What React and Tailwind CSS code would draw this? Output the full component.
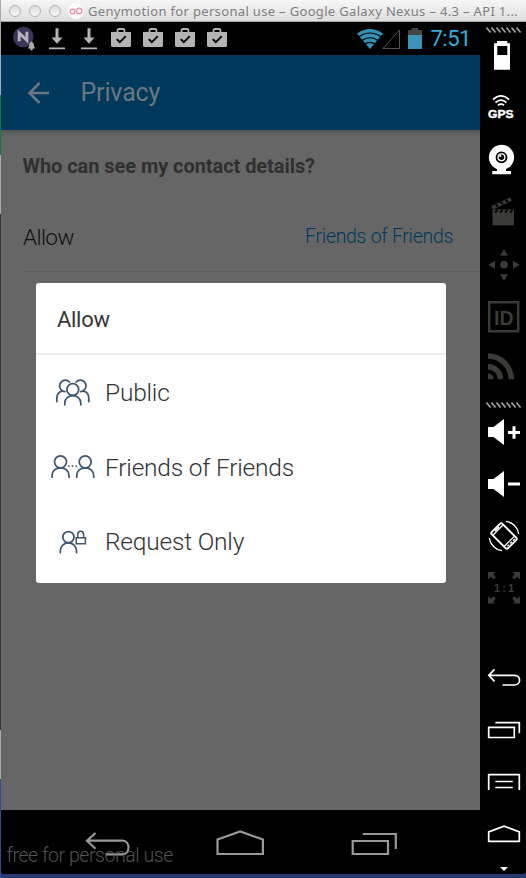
import React from "react";

const OPTIONS = [
  { label: "Public", icon: PublicIcon },
  { label: "Friends of Friends", icon: FriendsIcon },
  { label: "Request Only", icon: RequestIcon },
];

/* TITLE BAR */
function TitleBar() {
  return (
    <div className="flex h-[22px] items-center overflow-hidden border-b border-[#a3a3a3] bg-gradient-to-b from-[#f6f6f6] to-[#dedede] pl-[8px]">
      <div className="flex gap-2">
        {[0, 1, 2].map((i) => (
          <span key={i} className="h-3 w-3 rounded-full border border-[#b3b3b3] bg-gradient-to-b from-[#dcdcdc] to-[#f8f8f8]" />
        ))}
      </div>
      <svg className="ml-[7px] h-4 w-4 shrink-0" viewBox="0 0 16 16" fill="none" stroke="#e795b1" strokeWidth="1.4">
        <circle cx="8" cy="8" r="8" fill="#fafafa" stroke="none" />
        <circle cx="4.5" cy="8.5" r="2.3" />
        <circle cx="11.2" cy="8" r="2.8" />
      </svg>
      <span className="ml-[4px] whitespace-nowrap font-['Noto_Sans',sans-serif] text-[13px] leading-[20px] tracking-[0.335px] text-[#7f7f7f]">
        Genymotion for personal use – Google Galaxy Nexus – 4.3 – API 1...
      </span>
    </div>
  );
}

/* STATUS BAR */
function DownloadIcon() {
  return (
    <svg className="h-[33px] w-4" viewBox="0 0 16 33" fill="#b4b4b4">
      <path d="M6.5 6.3h3v9.200h4L8 21.700l-5.500-6.200h4zM0 25.500h16v1.800H0z" />
    </svg>
  );
}

function BagIcon() {
  return (
    <svg className="h-[33px] w-5" viewBox="0 0 20 33">
      <path d="M6.500 12V8.500q0-1.500 1.500-1.500h4q1.500 0 1.500 1.500V12" fill="none" stroke="#b4b4b4" strokeWidth="1.800" />
      <path d="M0 10h20v13.500q0 1.500-1.500 1.500h-17Q0 25 0 23.500z" fill="#b4b4b4" />
      <path d="M5.800 17.200l3 3 6-6" fill="none" stroke="#000" strokeWidth="1.900" />
    </svg>
  );
}

function StatusBar() {
  return (
    <div className="flex h-[33px] items-center bg-black pl-3">
      <svg className="h-[33px] w-[24px]" viewBox="13 22 24 33">
        <circle cx="23.300" cy="37" r="10.300" fill="#3d3459" />
        <path d="M19.200 41.300v-8.300l7.700 7.300v-8.600" fill="none" stroke="#b5b2bb" strokeWidth="2.900" />
        <path d="M31.500 41.500q2.600 1 2.600 5l1.200 2h-7.600l1.200-2q0-4 2.600-5zM30.300 48.500h2.400v1.800h-2.400z" fill="#aaa" />
      </svg>
      <div className="ml-3 flex gap-4"><DownloadIcon /><DownloadIcon /></div>
      <div className="ml-[14px] flex gap-3"><BagIcon /><BagIcon /><BagIcon /><BagIcon /></div>
      <svg className="ml-[129px] h-[33px] w-[67px]" viewBox="356 22 67 33">
        <path d="M357 33.500q13-9 26 0L370 49z" fill="#3192b8" />
        <path d="M358.500 37q11.500-8 23 0M361.500 40.700q8.500-6 17 0M364.500 44.200q5.500-3.600 11 0" fill="none" stroke="#000" strokeWidth="1.100" />
        <path d="M383 48.500L399.500 30v18.500z" fill="none" stroke="#555" />
        <path d="M411.500 28h6.500v2h4v5h-14v-5h3.500z" fill="#444" />
        <path d="M408 35h14v14h-14z" fill="#3b94b8" />
      </svg>
      <span className="ml-[7.500px] font-['Roboto',sans-serif] text-[22px] leading-[35px] tracking-[-0.500px] text-[#33afdd]">7:51</span>
    </div>
  );
}

/* DIALOG ICONS */
function RowIcon({ viewBox, children }) {
  return (
    <svg className="h-[75px] w-[46px] shrink-0" viewBox={viewBox} fill="none" stroke="#3f5570" strokeWidth="1.750" strokeLinecap="round">
      {children}
    </svg>
  );
}

function PublicIcon() {
  return (
    <RowIcon viewBox="50 354.500 46 75">
      <circle cx="72.800" cy="389" r="5.900" />
      <path d="M64.800 404.300v-1.800c0-4.500 3.600-7.500 8-7.500s8 3 8 7.500v1.800" />
      <path d="M69.500 381.500a5.700 5.700 0 1 0-7.500 8.500q1.200 1 3 1.100M62 390.700c-3.300.8-5.200 3.600-5.200 7.300v3" />
      <path d="M76.100 381.500a5.700 5.700 0 1 1 7.500 8.500q-1.200 1-3 1.100M83.600 390.700c3.300.8 5.200 3.600 5.200 7.300v3" />
    </RowIcon>
  );
}

function FriendsIcon() {
  return (
    <RowIcon viewBox="50 429 46 75">
      <circle cx="60.500" cy="461.800" r="6" />
      <path d="M52 477.200v-1.500c0-4.800 3.800-7.900 8.500-7.900s8.500 3.100 8.500 7.900v1.500" />
      <circle cx="85.200" cy="461.800" r="6" />
      <path d="M76.700 477.200v-1.500c0-4.800 3.800-7.900 8.500-7.900s8.500 3.100 8.500 7.900v1.500" />
      <path d="M68.800 466h.1M72.500 466h.1M76.200 466h.1" />
    </RowIcon>
  );
}

function RequestIcon() {
  return (
    <RowIcon viewBox="50 503.500 46 75">
      <circle cx="68.400" cy="536.600" r="5.600" />
      <path d="M60.300 552v-1.700c0-4.700 3.700-8 8.100-8s8.100 3.300 8.100 8v1.700" />
      <path d="M76.200 537.300h9.200v5.900h-9.200zM77.700 537v-3c0-4.400 5.900-4.400 5.900 0v3" strokeWidth="1.500" />
    </RowIcon>
  );
}

function AllowDialog() {
  return (
    <div className="absolute left-[34.500px] top-[153px] h-[299.500px] w-[410px] rounded-[3px] bg-white font-['Roboto',sans-serif]">
      <h2 className="h-[72px] border-b-2 border-[#ebebeb] pl-[21.500px] text-[22px] leading-[74px] tracking-[-0.300px] text-[#363636]">Allow</h2>
      {OPTIONS.map(({ label, icon: Icon }) => (
        <div key={label} className="flex h-[74.500px] items-center pl-[14.500px]">
          <Icon />
          <span className="ml-[9px] mt-[3px] text-[24.500px] font-light tracking-[-0.200px] text-[#333]">{label}</span>
        </div>
      ))}
    </div>
  );
}

function PrivacyScreen() {
  return (
    <div className="font-['Roboto',sans-serif]">
      <header className="flex h-[75px] items-center bg-[#00395c] pl-[26px]">
        <svg className="h-6 w-6" viewBox="0 0 24 24" fill="none" stroke="#6a7780" strokeWidth="2.500">
          <path d="M22 12H2.500M12.500 2l-10 10 10 10" />
        </svg>
        <h1 className="ml-[29.500px] text-[25px] leading-[78px] tracking-[-0.150px] text-[#6a7780]">Privacy</h1>
      </header>
      <main className="relative h-[680px] bg-[#666]">
        <div className="h-[7px] bg-gradient-to-b from-[#555] to-[#666]" />
        <h3 className="pl-[21.500px] pt-[14px] text-[20px] font-bold leading-[30px] tracking-[-0.060px] text-[#303030]">Who can see my contact details?</h3>
        <div className="ml-[22px] mt-[20px] flex h-[71px] items-center justify-between border-b border-[#5e5e5e] pr-[27px]">
          <span className="mt-[3px] text-[22.500px] font-light tracking-[-0.600px] text-[#111]">Allow</span>
          <span className="mt-[1px] text-[19.500px] font-light tracking-[-0.300px] text-[#00395c]">Friends of Friends</span>
        </div>
        <AllowDialog />
      </main>
    </div>
  );
}

function NavBar() {
  return (
    <div className="relative flex h-[64px] items-center bg-black pl-[84px]">
      <svg className="h-[64px] w-[46px]" viewBox="85 810 46 64" fill="none" stroke="#999" strokeWidth="2.200">
        <path d="M95.500 833l-8.500 7.700 8.500 8M87 840.700h35.500c8 0 8 13.600 0 13.600H105.500" />
      </svg>
      <svg className="ml-[85px] h-[64px] w-[50px]" viewBox="216.500 810 50 64" fill="none" stroke="#999" strokeWidth="2.200">
        <path d="M218 854v-14.500l22.700-8 22.700 8V854z" />
      </svg>
      <svg className="ml-[85px] h-[64px] w-[48px]" viewBox="351.500 810 48 64" fill="none" stroke="#999" strokeWidth="2.200">
        <path d="M363.300 834h33v15M353.200 841h35.300v13h-35.300z" />
      </svg>
      <span className="absolute left-[5.500px] top-[34px] whitespace-nowrap font-['Roboto',sans-serif] text-[19.500px] font-light leading-[24px] tracking-[-0.450px] text-[#686868]/80">
        free for personal use
      </span>
    </div>
  );
}

/* SIDE TOOLBAR: every tool keeps its own slice of the column */
function Tool({ top, height, children, ...rest }) {
  return (
    <svg width="46" height={height} viewBox={`0 ${top} 46 ${height}`} className="shrink-0" {...rest}>
      {children}
    </svg>
  );
}

function Grip({ y }) {
  return [0, 1, 2, 3, 4, 5, 6].map((i) => (
    <path key={i} d={`M${6.500 + i * 5} ${y}l4 5`} stroke="#a8a8a8" strokeWidth="1.500" />
  ));
}

function Toolbar() {
  const line = { fill: "none", stroke: "#fff", strokeWidth: 1.700 };
  return (
    <aside className="flex h-[852px] w-[46px] flex-col bg-black">
      <Tool top={22} height={14}><Grip y={27.500} /></Tool>
      <Tool top={36} height={44} fill="#fff">
        <path fillRule="evenodd" d="M17 41h10.300v2.300H30v26.500H14V43.300h3zM17.300 46v9h10v-9z" />
      </Tool>
      <Tool top={80} height={52} fill="none" stroke="#fff" strokeWidth="1.800">
        <path d="M13 99.500q8-7.200 16 0M15.500 102.500q5.500-4.800 11 0M18 105.300q3-2.300 6 0" />
        <text x="8" y="118" fill="#fff" strokeWidth=".4" textLength="25.500" lengthAdjust="spacingAndGlyphs" className="font-['Liberation_Sans',sans-serif] text-[11.500px] font-bold">GPS</text>
      </Tool>
      <Tool top={132} height={52} fill="#fff">
        <circle cx="21.500" cy="157.300" r="12.600" />
        <path d="M17 168h9v3h5v3.300H12.200V171H17z" />
        <circle cx="21.500" cy="157.300" r="5" fill="#fff" stroke="#000" strokeWidth="1.800" />
        <circle cx="21.500" cy="157.300" r="2.700" fill="#000" />
        <circle cx="20.300" cy="156" r="1.100" />
      </Tool>
      <Tool top={184} height={52} fill="#3b3b38">
        <path d="M12.500 209.500H34v15.800H12.500z" />
        <path d="M11.300 206l19-8.700 1.600 3.500-19 8.700z" />
        <path d="M15 212.700l2.500-2.500M20 212.700l2.500-2.500M25 212.700l2.500-2.500M30 212.700l2.500-2.500M15.500 204.500l2.500 2M20.500 202.200l2.500 2M25.500 200l2.500 2" stroke="#000" strokeWidth="1.700" />
      </Tool>
      <Tool top={236} height={54} fill="#3b3b38">
        <circle cx="24" cy="264.800" r="3.800" />
        <path d="M24 249.300l4 6.300h-8zM24 280.700l4-6.500h-8zM8.300 264.800l6.700-4v8zM39.700 264.800l-6.700-4v8z" />
      </Tool>
      <Tool top={290} height={54} fill="none" stroke="#3b3b38" strokeWidth="2.400">
        <path d="M9.200 302.200h29v29h-29z" />
        <text x="14" y="324.500" fill="#3b3b38" stroke="none" textLength="19.500" lengthAdjust="spacingAndGlyphs" className="font-['Liberation_Sans',sans-serif] text-[21px] font-bold">ID</text>
      </Tool>
      <Tool top={344} height={54} fill="none" stroke="#3b3b38" strokeWidth="5.400">
        <path d="M8 356a23.300 23.300 0 0 1 23.300 23.300M8 366.800a12.500 12.500 0 0 1 12.500 12.500" />
        <path d="M8 373.500a5.800 5.800 0 0 1 5.800 5.800H8z" fill="#3b3b38" stroke="none" />
      </Tool>
      <Tool top={398} height={14}><Grip y={402.500} /></Tool>
      <Tool top={412} height={46} fill="#fff">
        <path d="M8 427h5.500L24 419v26l-10.500-8H8zM28 431h4.500v-4.700h3v4.700H40v3h-4.500v4.700h-3V434H28z" />
      </Tool>
      <Tool top={458} height={50} fill="#fff">
        <path d="M8 479h5.500l10.500-8v26l-10.500-8H8zM28 482.600h12v3H28z" />
      </Tool>
      <Tool top={508} height={56} fill="none" stroke="#fff" strokeWidth="1.300">
        <g transform="rotate(-45 24 536)">
          <rect x="16.500" y="524.500" width="15" height="23" rx="1.800" strokeWidth="1.900" />
          <path d="M17 527.500h14M17 543.500h14M21 526h6M19 545.700h2.500M23 545.700h2.500M27 545.700h2.500" />
        </g>
        <path d="M26 521.300A14.800 14.800 0 0 1 38.700 534M9.300 538A14.800 14.800 0 0 0 22 550.700" />
      </Tool>
      <Tool top={564} height={48} fill="#3b3b38">
        <path d="M8 572h7.500l-2.300 2.300 2.500 3-2 2-3-2.500L8 579.500zM40 572h-7.500l2.300 2.300-2.500 3 2 2 3-2.500 2.700 2.700zM8 603.500h7.500l-2.300-2.300 2.500-3-2-2-3 2.500L8 596zM40 603.500h-7.500l2.300-2.300-2.500-3 2-2 3 2.500L40 596z" />
        <text x="14" y="592.300" textLength="20" className="font-['Liberation_Sans',sans-serif] text-[11px] font-bold">1 : 1</text>
      </Tool>
      <Tool top={612} height={90} {...line}>
        <path d="M14.500 669.300L8.800 675.300l5.700 6M8.800 675.300h25.500c7 0 7 9.700 0 9.700H22.500" />
      </Tool>
      <Tool top={702} height={52} {...line}>
        <path d="M15.300 722.700h24v10.500M8.700 727.300h25.600v10.200H8.700z" />
      </Tool>
      <Tool top={754} height={54} {...line}>
        <path d="M8.700 790v-15.300h30.600V790M15.300 781.500h17.500M15.300 787.500h17.500" />
      </Tool>
      <Tool top={808} height={66} {...line}>
        <path d="M8.700 841.300v-9.400l15.300-5.700 15.300 5.700v9.400z" />
        <path d="M20 867h8l-4 4z" fill="#fff" stroke="none" />
      </Tool>
    </aside>
  );
}

export default function App() {
  return (
    <div className="flex h-[878px] w-[526px] overflow-hidden bg-[#26396f]">
      {/* sliver of the desktop left of the window */}
      <div className="flex w-px shrink-0 flex-col">
        <div className="h-[95px] bg-[#aaa]" />
        <div className="h-[60px] bg-[#0a7f45]" />
        <div className="h-[59px] bg-[#aaa]" />
        <div className="h-[516px] bg-[#383838]" />
        <div className="h-[49px] bg-[#aaa]" />
        <div className="flex-1 bg-[#2c4f94]" />
      </div>
      <div className="h-[874px] w-[525px] overflow-hidden rounded-b-[3px]">
        <TitleBar />
        <div className="flex">
          <div className="w-[479px] shrink-0">
            <StatusBar />
            <PrivacyScreen />
            <NavBar />
          </div>
          <Toolbar />
        </div>
      </div>
    </div>
  );
}
